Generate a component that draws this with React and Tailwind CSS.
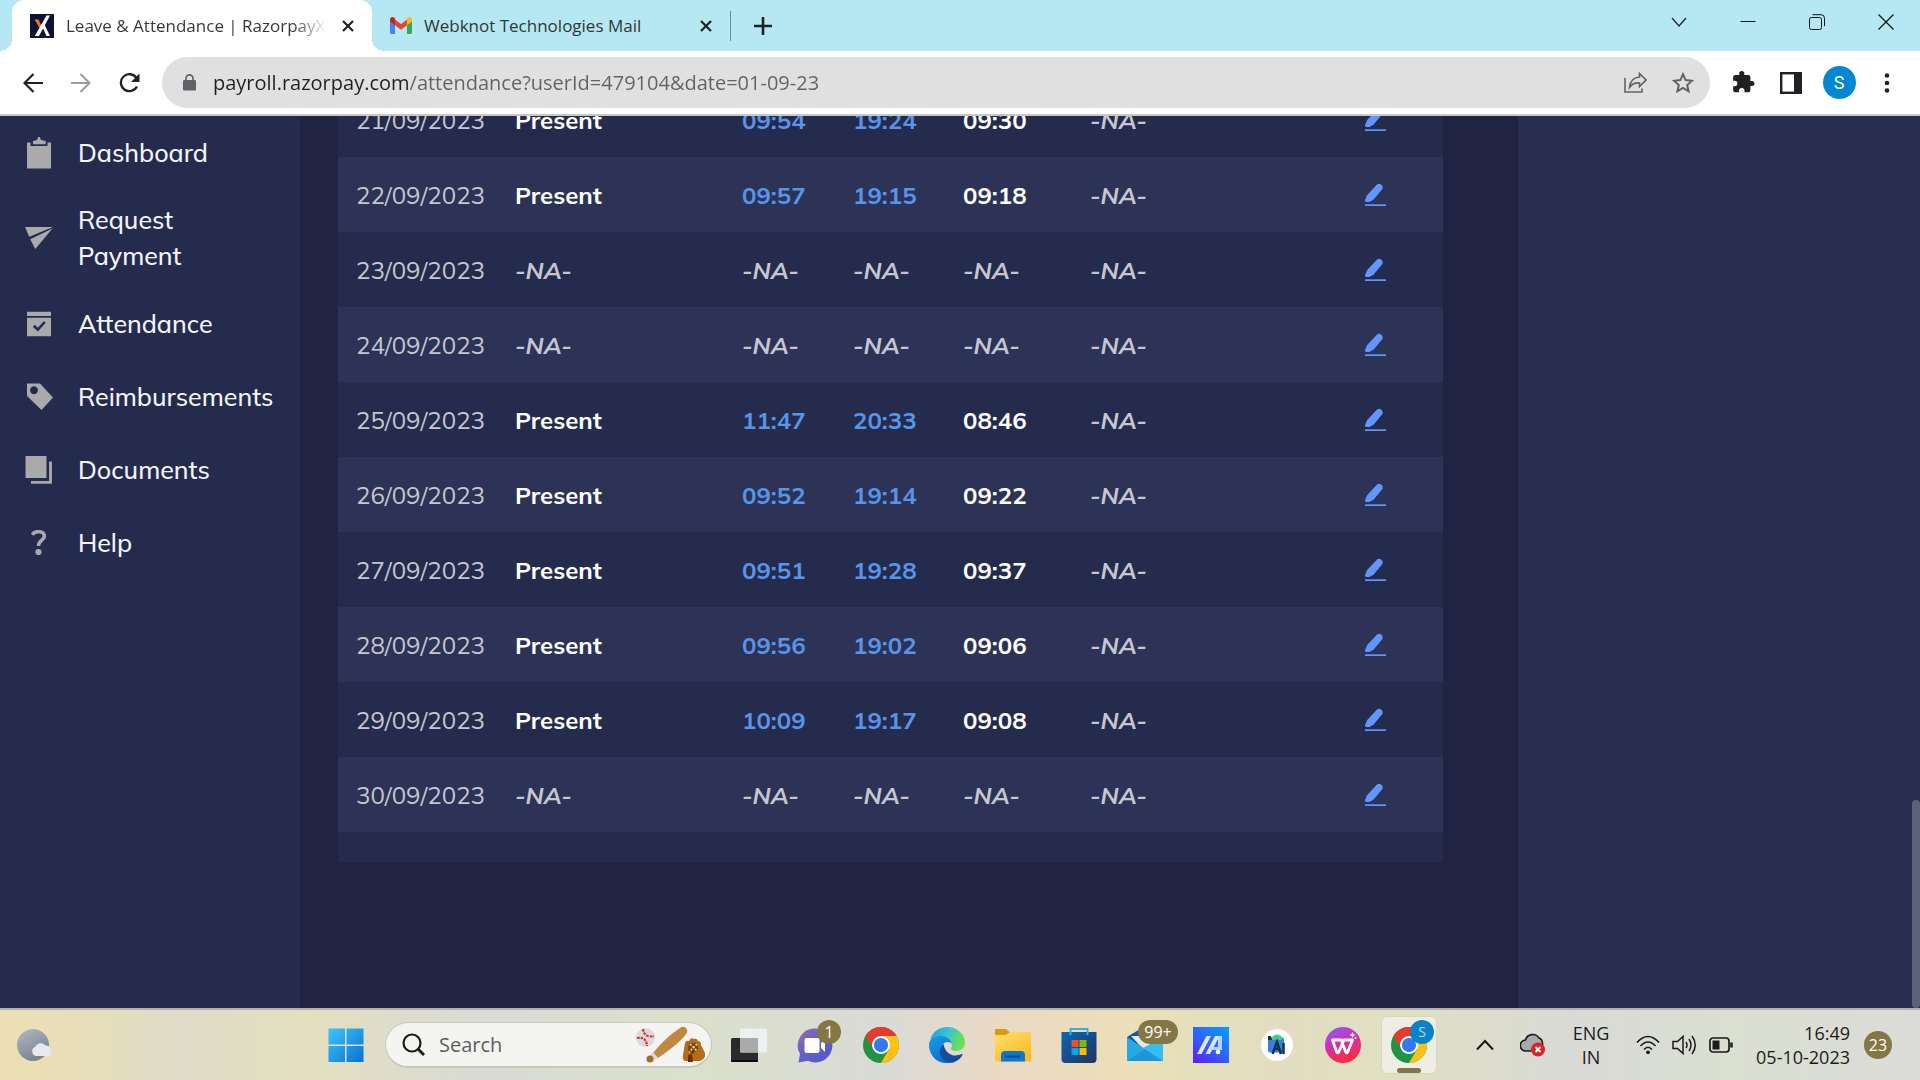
import React from "react";

const days = [
  ["21/09/2023", "Present", "09:54", "19:24", "09:30"],
  ["22/09/2023", "Present", "09:57", "19:15", "09:18"],
  ["23/09/2023"],
  ["24/09/2023"],
  ["25/09/2023", "Present", "11:47", "20:33", "08:46"],
  ["26/09/2023", "Present", "09:52", "19:14", "09:22"],
  ["27/09/2023", "Present", "09:51", "19:28", "09:37"],
  ["28/09/2023", "Present", "09:56", "19:02", "09:06"],
  ["29/09/2023", "Present", "10:09", "19:17", "09:08"],
  ["30/09/2023"],
];

const CloseX = () => (
  <svg width="12" height="12" viewBox="0 0 12 12" stroke="#202124" strokeWidth="2.2">
    <path d="M1 1l10 10M11 1L1 11" />
  </svg>
);

function TabStrip() {
  return (
    <div className="flex h-[51px] shrink-0 items-center bg-[#b5e8f3] pl-3">
      <div className="relative flex h-full w-[360px] items-center rounded-t-xl bg-white pl-[18px] pr-[18px]">
        <span className="absolute bottom-0 -left-3 h-3 w-3 bg-[radial-gradient(circle_at_0_0,#b5e8f3_12px,#fff_12px)]" />
        <span className="absolute bottom-0 -right-3 h-3 w-3 bg-[radial-gradient(circle_at_100%_0,#b5e8f3_12px,#fff_12px)]" />
        <svg width="24" height="24" viewBox="0 0 24 24" className="shrink-0">
          <rect width="24" height="24" fill="#0d1333" />
          <path d="M4.5 5.5h4l3 6.5-1.6 2.5z" fill="#f5701d" />
          <path d="M16.5 1.5H20L9 22H4.800z" fill="#fff" />
          <path d="M11.500 11l2-2.500L20 22h-3.500z" fill="#fff" />
        </svg>
        <span className="ml-3 flex-1 overflow-hidden whitespace-nowrap bg-[linear-gradient(to_right,#333639_88%,#33363900_101%)] bg-clip-text text-[17px] text-transparent">
          Leave &amp; Attendance | RazorpayX
        </span>
        <button aria-label="Close tab" className="ml-[18px]"><CloseX /></button>
      </div>
      <div className="flex h-full w-[358px] items-center pl-[18px] pr-[18px]">
        <svg width="22" height="17" viewBox="0 0 22 17" className="shrink-0">
          <path d="M0 3v12.500A1.500 1.500 0 0 0 1.500 17H5V6.500z" fill="#4285f4" />
          <path d="M22 3v12.500a1.500 1.500 0 0 1-1.500 1.500H17V6.500z" fill="#34a853" />
          <path d="M5 2.500l6 4.500 6-4.500v5.700l-6 4.500-6-4.500z" fill="#ea4335" />
          <path d="M0 2.800C0 .3 2.500-.7 4.300.8L5 1.400v6.800L0 4.500z" fill="#c5221f" />
          <path d="M22 2.800C22 .3 19.500-.7 17.700.8L17 1.400v6.800l5-3.700z" fill="#fbbc04" />
        </svg>
        <span className="ml-3 flex-1 whitespace-nowrap text-[17px] text-[#333639]">Webknot Technologies Mail</span>
        <button aria-label="Close tab"><CloseX /></button>
      </div>
      <div className="h-[30px] w-px bg-[#6f8f97]" />
      <button aria-label="New tab" className="ml-[23px]">
        <svg width="18" height="18" viewBox="0 0 18 18" stroke="#202124" strokeWidth="2.600"><path d="M9 0v18M0 9h18" /></svg>
      </button>
      <div className="ml-auto flex h-full items-start pt-[14px]">
        <button aria-label="Search tabs" className="grid h-4 w-[69px] place-items-center">
          <svg width="16" height="16" viewBox="0 0 16 16" fill="none" stroke="#202124" strokeWidth="1.200"><path d="M1 4l7 8 7-8" /></svg>
        </button>
        <button aria-label="Minimize" className="grid h-4 w-[69px] place-items-center">
          <svg width="16" height="16" viewBox="0 0 16 16" stroke="#111"><path d="M0.500 7.500h15" /></svg>
        </button>
        <button aria-label="Restore" className="grid h-4 w-[69px] place-items-center">
          <svg width="16" height="16" viewBox="0 0 16 16" fill="none" stroke="#111">
            <rect x="0.500" y="3.500" width="12" height="12" rx="2" /><path d="M3.500.7H12a3.500 3.500 0 0 1 3.500 3.500v8" />
          </svg>
        </button>
        <button aria-label="Close" className="grid h-4 w-[69px] place-items-center">
          <svg width="16" height="16" viewBox="0 0 16 16" stroke="#111" strokeWidth="1.200"><path d="M.5.5l15 15M15.500.5l-15 15" /></svg>
        </button>
      </div>
    </div>
  );
}

const slot = "grid h-12 w-12 shrink-0 place-items-center";

function Toolbar() {
  return (
    <div className="flex h-[65px] shrink-0 items-center border-b-2 border-[#c8c8c8] bg-white px-[9px]">
      <button aria-label="Back" className={slot}>
        <svg width="20" height="20" viewBox="0 0 20 20" fill="none" stroke="#202124" strokeWidth="2.200"><path d="M20 10H1.500M10.500 1l-9 9 9 9" /></svg>
      </button>
      <button aria-label="Forward" className={slot}>
        <svg width="20" height="20" viewBox="0 0 20 20" fill="none" stroke="#9b9b9b" strokeWidth="2"><path d="M0 10h18.500M9.500 1l9 9-9 9" /></svg>
      </button>
      <button aria-label="Reload" className={slot}>
        <svg width="21" height="20" viewBox="0 0 21 20" fill="none" stroke="#202124" strokeWidth="2.300">
          <path d="M18 13.500A8.500 8.500 0 1 1 17.500 5" /><path d="M20.500.5V9H12z" fill="#202124" stroke="none" />
        </svg>
      </button>
      <div className="ml-[9px] mr-[9px] flex h-[51px] flex-1 items-center rounded-full bg-[#e0e0e0] px-[3px]">
        <span className={slot}>
          <svg width="13" height="17" viewBox="0 0 13 17"><rect y="6" width="13" height="10.500" rx="1.300" fill="#5f6368" /><path d="M3 7V4.300a3.500 3.500 0 0 1 7 0V7" fill="none" stroke="#5f6368" strokeWidth="1.700" /></svg>
        </span>
        <input
          aria-label="Address"
          readOnly
          value="payroll.razorpay.com/attendance?userId=479104&date=01-09-23"
          className="h-8 min-w-0 flex-1 bg-[linear-gradient(to_right,#202124_196px,#5f6368_196px)] bg-clip-text text-xl text-transparent outline-none"
        />
        <button aria-label="Share" className={slot}>
          <svg width="23" height="21" viewBox="0 0 23 21" fill="none" stroke="#5f6368" strokeWidth="1.600">
            <path d="M1 6v14h17v-3.500" /><path d="M15.500 1.500L22 8l-6.500 6.500V11C11 10.500 8 12 5.500 15.500 6 10 9 5.500 15.500 5z" />
          </svg>
        </button>
        <button aria-label="Bookmark" className={slot}>
          <svg width="22" height="21" viewBox="0 0 22 21" fill="none" stroke="#5f6368" strokeWidth="2"><path d="M11 2.200l2.600 5.900 6.400.6-4.800 4.300 1.400 6.300L11 16l-5.600 3.300L6.800 13 2 8.700l6.400-.6z" /></svg>
        </button>
      </div>
      <button aria-label="Extensions" className={slot}>
        <svg width="27" height="27" viewBox="0 0 24 24" fill="#202124"><path d="M20.500 11H19V7a2 2 0 0 0-2-2h-4V3.500a2.500 2.500 0 0 0-5 0V5H4a2 2 0 0 0-2 2v3.800h1.500a2.700 2.700 0 0 1 0 5.400H2V20a2 2 0 0 0 2 2h3.800v-1.500a2.700 2.700 0 0 1 5.400 0V22H17a2 2 0 0 0 2-2v-4h1.500a2.500 2.500 0 0 0 0-5z" transform="translate(1 .8) scale(.9)" /></svg>
      </button>
      <button aria-label="Side panel" className={slot}>
        <svg width="22" height="22" viewBox="0 0 22 22"><rect x="1.200" y="1.200" width="19.600" height="19.600" fill="none" stroke="#202124" strokeWidth="2.400" /><path d="M14 1h7v20h-7z" fill="#202124" /></svg>
      </button>
      <button aria-label="Profile" className={slot}>
        <span className="grid h-[33px] w-[33px] place-items-center rounded-full bg-[#0288d1] font-['Roboto',sans-serif] text-lg text-white">S</span>
      </button>
      <button aria-label="Menu" className={slot}>
        <svg width="6" height="20" viewBox="0 0 6 20" fill="#202124"><circle cx="3" cy="2.500" r="2.300" /><circle cx="3" cy="10" r="2.300" /><circle cx="3" cy="17.500" r="2.300" /></svg>
      </button>
    </div>
  );
}

const menu = [
  ["Dashboard", (
    <svg width="24" height="32" viewBox="0 0 24 32" fill="#aaa" key="i"><path d="M0 5.500h3.500V9h17V5.500H24V31.500H0z" /><path d="M6 7.300V4l4-1 1.300-3h1.500L14 3l4.700 1v3.300z" /></svg>
  )],
  ["Request Payment", (
    <svg width="28" height="22" viewBox="0 0 28 22" fill="#aaa" key="i"><path d="M0 0h28L4.300 9.800z" /><path d="M5.200 12.200L27.500 1.500 10.300 22z" /></svg>
  )],
  ["Attendance", (
    <svg width="24" height="26" viewBox="0 0 24 26" key="i"><path d="M0 .7h24V5H0zM0 6.800h24v18.500H0z" fill="#aaa" /><path d="M6.800 14.800l4 3.900 7-7.700" fill="none" stroke="#252b4d" strokeWidth="2.600" /></svg>
  )],
  ["Reimbursements", (
    <svg width="28" height="28" viewBox="-2 0 28 28" key="i"><path fillRule="evenodd" d="M0 .5h13L26 14.500 14.500 27 0 13zM7 3.200a4 4 0 1 0 .01 0z" fill="#aaa" /></svg>
  )],
  ["Documents", (
    <svg width="28" height="28" viewBox="0 0 28 28" key="i"><path d="M.5 0h21v22H.5z" fill="#aaa" /><path d="M25.500 5.500V26.300H6" fill="none" stroke="#aaa" strokeWidth="2.800" /></svg>
  )],
  ["Help", (
    <svg width="16" height="26" viewBox="0 0 16 26" key="i"><path d="M1.300 4.800C4 .3 14 .8 13.300 6.500 13 10.300 7.500 10.500 7.500 16" fill="none" stroke="#aaa" strokeWidth="3.600" /><circle cx="7.500" cy="22" r="3.100" fill="#aaa" /></svg>
  )],
];

function Sidebar() {
  return (
    <nav className="w-[300px] shrink-0 bg-[#252b4d]">
      <ul>
        {menu.map(([label, icon]) => (
          <li key={label}>
            <a href="#" className="flex min-h-[73px] items-center py-[13px] font-['Mulish','Lato',sans-serif] text-[25px] leading-9 font-medium text-[#f4f5f8]">
              <span className="grid w-[78px] shrink-0 place-items-center">{icon}</span>
              <span className="w-[200px]">{label}</span>
            </a>
          </li>
        ))}
      </ul>
    </nav>
  );
}

const na = <em className="text-[#c5c7d0]">-NA-</em>;

function Attendance() {
  return (
    <main className="flex min-w-0 flex-1 flex-col justify-end overflow-hidden bg-[#202342] pr-[75px] pb-[146px] pl-[38px]">
      <div className="bg-[#252b4d] pb-[30px]">
        <table className="w-full table-fixed font-['Mulish','Lato',sans-serif] text-2xl font-bold text-white">
          <colgroup>
            <col className="w-[158px]" /><col className="w-[227px]" /><col className="w-[111px]" /><col className="w-[110px]" />
            <col className="w-[127px]" /><col /><col className="w-[98px]" />
          </colgroup>
          <tbody>
            {days.map(([date, status, start, end, total]) => (
              <tr key={date} className="h-[75px] even:bg-[#2d3356]">
                <td className="pl-[18px] font-normal text-[#c5c7d0]">{date}</td>
                <td className="pl-[19px]">{status || na}</td>
                <td className="pl-[19px] text-[#5795ea]">{start || na}</td>
                <td className="pl-[19px] text-[#5795ea]">{end || na}</td>
                <td className="pl-[19px]">{total || na}</td>
                <td className="pl-[19px]">{na}</td>
                <td className="pl-[19px]">
                  <button aria-label={"Edit " + date} className="block">
                    <svg width="23" height="24" viewBox="0 0 23 24" fill="#6196ff">
                      <path d="M13.300 1.200a3.800 3.800 0 0 1 5.300 4.500L9.500 16.800 5.300 19H1.500V18.200L.8 17.500 3.200 12z" />
                      <path d="M1 21.300h21v1.700H1z" />
                    </svg>
                  </button>
                </td>
              </tr>
            ))}
          </tbody>
        </table>
      </div>
    </main>
  );
}

const Chrome = () => (
  <svg width="36" height="36" viewBox="0 0 48 48">
    <circle cx="24" cy="24" r="24" fill="#229342" />
    <path d="M44.780 12A24 24 0 0 1 24 48L34.390 30 24 12z" fill="#fbc116" />
    <path d="M3.220 12A24 24 0 0 1 44.780 12H24L13.600 30z" fill="#e33b2e" />
    <circle cx="24" cy="24" r="12" fill="#fff" />
    <circle cx="24" cy="24" r="9.500" fill="#2f7bee" />
  </svg>
);

const apps = [
  ["Task view", (
    <svg width="36" height="36" viewBox="0 0 36 36">
      <rect y="11" width="27" height="24" rx="1.500" fill="#2a2a2a" /><path d="M0 33h27v.5a1.500 1.500 0 0 1-1.500 1.500h-24A1.500 1.500 0 0 1 0 33.500z" fill="#0c0c0c" />
      <rect x="9" y="1.500" width="27" height="24" rx="1.500" fill="#eeeff0" /><path d="M9 11h18v14.500H10.500A1.500 1.500 0 0 1 9 24z" fill="#a9aaaa" />
    </svg>
  )],
  ["Chat", (
    <svg width="36" height="36" viewBox="0 0 36 36">
      <defs><linearGradient id="chat" x1="0" y1="0" x2=".8" y2="1"><stop stopColor="#9a6aae" /><stop offset=".5" stopColor="#6062c8" /><stop offset="1" stopColor="#5558c8" /></linearGradient></defs>
      <path d="M18 1.500a17 17 0 1 1-7 32.300L1.500 35.500 3 27A17 17 0 0 1 18 1.500z" fill="url(#chat)" />
      <rect x="7.500" y="11" width="15" height="15" rx="2" fill="#fff" /><path d="M24 16l4-4v13l-4-4z" fill="#fff" />
    </svg>
  ), "1"],
  ["Chrome", <Chrome key="c" />],
  ["Edge", (
    <svg width="36" height="36" viewBox="0 0 36 36">
      <defs>
        <linearGradient id="edgeTop" x1="0" y1="0" x2="1" y2=".3"><stop stopColor="#1d9ce0" /><stop offset=".5" stopColor="#35c1d8" /><stop offset="1" stopColor="#6be052" /></linearGradient>
        <linearGradient id="edgeSide" x1="0" y1="0" x2=".5" y2="1"><stop stopColor="#1a9ee6" /><stop offset="1" stopColor="#0a6fd0" /></linearGradient>
      </defs>
      <path d="M1 13C3.500 5 10 0 18 0c11 0 18 8 18 15.500C36 21 31.500 24 27.500 24c-3.500 0-5.500-1.300-5.500-2.500 0-.7 1-1.300 1-3.700C23 13 17 9 11 9 6 9 2.500 11 1 13z" fill="url(#edgeTop)" />
      <path d="M0 18C0 12 5 8.800 11 8.800c7 0 12 4.700 12 9 0-3-7.500-5.300-10.500 2C10 27 14 34 21.500 35.600 9.500 38.500 0 29 0 18z" fill="url(#edgeSide)" />
      <path d="M14.500 17C7 24 12 34 20.500 35.800 26.500 36 31.500 32 33.500 28c.4-1-.3-1.400-1-.9-7 3.500-16 .9-18-10.100z" fill="#114f9c" />
    </svg>
  )],
  ["File Explorer", (
    <svg width="36" height="36" viewBox="0 0 36 36">
      <defs><linearGradient id="folder" x1="0" y1="0" x2=".6" y2="1"><stop stopColor="#ffde72" /><stop offset="1" stopColor="#fcbc22" /></linearGradient></defs>
      <path d="M0 2h11l4 3.500V9H0z" fill="#dc9b0c" /><path d="M0 8h11l4-3h21v29.500H0z" fill="url(#folder)" />
      <path d="M6 34.500V28a4 4 0 0 1 4-4h16a4 4 0 0 1 4 4v6.500z" fill="#0f77cb" /><path d="M10 29.500h15" stroke="#0a4f95" strokeWidth="2" />
    </svg>
  )],
  ["Store", (
    <svg width="36" height="36" viewBox="0 0 36 36">
      <defs><linearGradient id="store" x1="0" y1="0" x2="1" y2="1"><stop stopColor="#0a67b8" /><stop offset="1" stopColor="#23335c" /></linearGradient></defs>
      <path d="M.5 5h35v27a4 4 0 0 1-4 4h-27a4 4 0 0 1-4-4z" fill="url(#store)" /><path d="M9.500 8V2h17v6" fill="none" stroke="#28b3ee" strokeWidth="2" />
      <path d="M10.500 13h7v7h-7z" fill="#f25022" /><path d="M18.500 13h7v7h-7z" fill="#7fba00" /><path d="M10.500 21h7v7h-7z" fill="#00a4ef" /><path d="M18.500 21h7v7h-7z" fill="#ffb900" />
    </svg>
  )],
  ["Mail", (
    <svg width="36" height="36" viewBox="0 0 36 36">
      <path d="M0 10L18-1l18 11v13H0z" fill="#0a5ca8" /><path d="M4 9h28v8L18 24z" fill="#e9e9ed" />
      <path d="M0 10l36 24H0z" fill="#29a8e8" /><path d="M36 10v24L16 21z" fill="#35bdf2" /><path d="M0 34l18-12 18 12z" fill="#1d97dc" />
    </svg>
  ), "99+"],
  ["MyASUS", (
    <svg width="36" height="36" viewBox="0 0 36 36">
      <defs><linearGradient id="asus" x1=".1" y1="1" x2=".9" y2="0"><stop stopColor="#5a1fff" /><stop offset=".5" stopColor="#2c66ff" /><stop offset="1" stopColor="#049cff" /></linearGradient></defs>
      <path d="M0 0h36v36H0z" fill="url(#asus)" />
      <path d="M4 27L13.500 9H18L8.500 27z" fill="#dfe8ff" /><path d="M12.500 27L22 9h4.500L17 27z" fill="#dfe8ff" /><path d="M25 9h4v14h-4z" fill="#b9d3ff" /><path d="M18 20h9v3H16.500z" fill="#b9d3ff" /><circle cx="25" cy="25" r="2.300" fill="#fff" />
    </svg>
  )],
  ["Android Studio", (
    <svg width="36" height="36" viewBox="0 0 36 36">
      <circle cx="18" cy="18" r="16" fill="#fff" /><rect x="9" y="10.500" width="16" height="15" rx="2" fill="#3d7de0" />
      <path d="M12.500 13a5.500 5.500 0 0 1 11 0z" fill="#3dcf80" /><path d="M9 9h3l1 4H9z" fill="#163b43" />
      <path d="M13.500 27l4.500-12 4 12M14.500 22h7M24.500 16v11" stroke="#0d3349" strokeWidth="2.500" fill="none" />
    </svg>
  )],
  ["WPS Office", (
    <svg width="36" height="36" viewBox="0 0 36 36">
      <defs><linearGradient id="wps" x1=".2" y1="0" x2=".6" y2="1"><stop stopColor="#8d5cf8" /><stop offset=".45" stopColor="#d22fb0" /><stop offset="1" stopColor="#ff2b33" /></linearGradient></defs>
      <circle cx="18" cy="18" r="18" fill="url(#wps)" />
      <path d="M17.500 17.500L16.500 13H7.500l4.300 12.200q.8 1.300 1.800 0L19 13h1.500M18.500 19l2.300 6.200q.8 1.300 1.800 0L27.500 13H22" fill="none" stroke="#fff" strokeWidth="2.800" strokeLinejoin="round" strokeLinecap="round" />
      <path d="M27.500 5l.9 2.100 2.100.9-2.100.9-.9 2.100-.9-2.100-2.100-.9 2.100-.9z" fill="#fff" /><circle cx="30.500" cy="11" r="1" fill="#fff" />
    </svg>
  )],
];

function Taskbar() {
  return (
    <footer className="flex h-[72px] shrink-0 items-center border-t-2 border-[#b3b1a6] bg-[linear-gradient(to_right,#ecdfb4_0%,#e6deba_5%,#dfdcc8_9%,#e3dfbf_16%,#d9dbd5_25%,#dbe0cb_36%,#d9dbd6_46%,#ead9c4_52%,#ecdfb8_59%,#e4e0ba_62%,#e4dcc2_67%,#e0e0c1_72%,#d9dad6_82%,#dadfd0_90%,#dbdcd8_100%)] pr-[28px] text-[#1b1b1b]">
      <button aria-label="Weather" className="ml-4 mr-auto">
        <svg width="36" height="36" viewBox="0 0 36 36">
          <defs><linearGradient id="moon" x1="0" y1="0" x2=".5" y2="1"><stop stopColor="#b3bac4" /><stop offset="1" stopColor="#7a838f" /></linearGradient></defs>
          <circle cx="17" cy="18" r="16" fill="url(#moon)" /><path d="M20 29a5 5 0 0 1-.5-9.500 6 6 0 0 1 10-1 6 6 0 0 1 4 10.500z" fill="#e6eaee" />
        </svg>
      </button>
      <div className="flex items-center">
        <button aria-label="Start" className="grid w-[66px] place-items-center">
          <svg width="36" height="36" viewBox="0 0 36 36">
            <defs><linearGradient id="win" x1="0" y1="0" x2="1" y2="1"><stop stopColor="#3fc6fb" /><stop offset="1" stopColor="#0672d0" /></linearGradient></defs>
            <path d="M.5 1.500h16.500v16H.5zM18.500 1.500h17v16h-17zM.5 19h16.500v16H.5zM18.500 19h17v16h-17z" fill="url(#win)" />
          </svg>
        </button>
        <label className="mr-1 ml-1.5 flex h-[46px] w-[327px] items-center rounded-full border border-b-2 border-[#c5c8bd] bg-[#f4f5f1] pl-[15px]">
          <svg width="24" height="24" viewBox="0 0 24 24" fill="none" stroke="#1b1b1b" strokeWidth="2.200" className="shrink-0"><circle cx="11" cy="10" r="8.500" /><path d="M17 16l6 6" strokeWidth="2.800" /></svg>
          <input aria-label="Search" placeholder="Search" className="ml-3.5 w-0 flex-1 bg-transparent text-xl placeholder-[#5d5d5d] outline-none" />
          <svg width="72" height="38" viewBox="0 0 72 38" className="mr-1 shrink-0">
            <circle cx="10.500" cy="11.500" r="9.500" fill="#ddd8e4" /><path d="M8 3q1 6 5 7t6 0M2 12q6-1 8 2t2 6" fill="none" stroke="#cc3a22" strokeWidth="2.200" strokeDasharray="2.500 1" />
            <path d="M45 2a4 4 0 0 1 6 6Q45 17 23 32l-5-5Q31 11 45 2z" fill="#c08840" /><path d="M18 26l5 6-4 3-5-5z" fill="#ddd5cf" /><circle cx="15" cy="33" r="3.500" fill="#a46a30" />
            <path d="M48 29l2-12q1-3 4-2 2-4 5-2 3-1 4 2 3 0 3 4l4 8q1 6-5 8H51q-4 0-3-6z" fill="#b56d1c" /><path d="M54 17l8 0 1 6-5 5-5-3z" fill="#72430f" /><path d="M55 18l7 7M62 18l-8 8" stroke="#e6cfa4" strokeWidth="1.800" strokeDasharray="2 1.500" /><path d="M53 36v-7l4-1 1 8z" fill="#613607" />
          </svg>
        </label>
        {apps.map(([name, icon, badge]) => (
          <button key={name} aria-label={name} className="relative grid w-[66px] place-items-center">
            {icon}
            {badge && (
              <span className={"absolute -top-[7px] grid h-6 place-items-center rounded-full bg-[#857645] text-base leading-6 text-white " + (badge.length > 1 ? "left-[26px] w-10" : "left-[35px] w-6")}>{badge}</span>
            )}
          </button>
        ))}
        <button aria-label="Chrome, open window" className="relative mx-[5px] grid h-[58px] w-14 place-items-center rounded-md border border-[#d8d6c8] bg-[#efeee5]">
          <Chrome />
          <span className="absolute top-[3px] right-0.5 grid h-6 w-6 place-items-center rounded-full bg-[#0b82c6] text-sm text-[#a9dcf5]">S</span>
          <span className="absolute bottom-0 h-[5px] w-6 rounded-full bg-[#857645]" />
        </button>
      </div>
      <div className="ml-[34px] flex items-center">
        <button aria-label="Hidden icons" className="w-8">
          <svg width="18" height="12" viewBox="0 0 18 12" fill="none" stroke="#1b1b1b" strokeWidth="2"><path d="M1 10.500L9 2l8 8.500" /></svg>
        </button>
        <button aria-label="OneDrive" className="ml-3 w-[26px]">
          <svg width="26" height="24" viewBox="0 0 26 24">
            <path d="M6 18a5.500 5.500 0 0 1-.5-11A7.500 7.500 0 0 1 19 5q4 1 3.500 8L14 18z" fill="#a9a9a9" stroke="#1b1b1b" strokeWidth="1.600" />
            <circle cx="18" cy="16.500" r="7" fill="#d8252c" /><path d="M15.500 14l5 5M20.500 14l-5 5" stroke="#fff" strokeWidth="1.800" />
          </svg>
        </button>
        <button className="ml-[23px] w-11 text-center text-lg leading-6">ENG<br />IN</button>
        <button aria-label="Network, volume and battery" className="ml-[23px] flex items-center gap-3">
          <svg width="24" height="20" viewBox="0 0 24 20" fill="none" stroke="#1b1b1b" strokeWidth="1.700"><path d="M1 7.500q11-12 22 0M4.500 11q7.500-8 15 0M8 14.500q4-4.500 8 0" /><circle cx="12" cy="17.300" r="1.900" fill="#1b1b1b" stroke="none" /></svg>
          <svg width="25" height="24" viewBox="0 0 25 24" fill="none" stroke="#1b1b1b" strokeWidth="1.500"><path d="M1 8.500h4.500L11 3.500v17l-5.500-5H1z" /><path d="M14 9q2 3 0 6M17 6q4 6 0 12M20 3q6.500 9 0 18" /></svg>
          <svg width="24" height="16" viewBox="0 0 24 16" fill="none" stroke="#1b1b1b" strokeWidth="1.700"><rect x="1" y="1" width="19" height="14" rx="3" /><path d="M3.500 3.500h7v9h-7z" fill="#1b1b1b" stroke="none" /><path d="M22.500 5.500v5" strokeWidth="2.500" /></svg>
        </button>
        <button className="ml-[21px] w-[96px] text-right text-lg leading-6 whitespace-nowrap">16:49<br />05-10-2023</button>
        <span className="ml-3.5 grid h-7 w-7 place-items-center rounded-full bg-[#857645] text-base text-white">23</span>
      </div>
    </footer>
  );
}

export default function App() {
  return (
    <div className="flex h-screen flex-col overflow-hidden font-['Segoe_UI','Open_Sans',sans-serif]">
      <TabStrip />
      <Toolbar />
      <div className="relative flex min-h-0 flex-1">
        <Sidebar />
        <Attendance />
        <aside className="w-[402px] shrink-0 bg-[#292f50]" />
        <div className="absolute right-0 bottom-0 h-[208px] w-2 rounded-full bg-[#5d617b]" />
      </div>
      <Taskbar />
    </div>
  );
}
